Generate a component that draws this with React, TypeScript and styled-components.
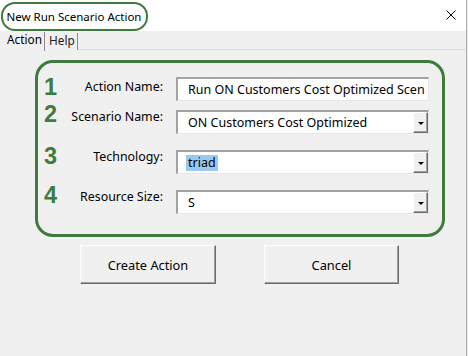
import React from "react";
import styled, { createGlobalStyle } from "styled-components";

const GREEN = "#3f7b3f";
const FONT = `"Noto Sans", "Open Sans", Arial, sans-serif`;

const GlobalStyle = createGlobalStyle`
  html, body { margin: 0; padding: 0; background: #f0f0f0; }
  body { font-family: ${FONT}; color: #000; }
  * { box-sizing: border-box; }
`;

const Window = styled.div`
  width: 467px;
  height: 356px;
  background: #f0f0f0;
  border-right: 1px solid #a9a9a9;
  display: flex;
  flex-direction: column;
`;

const TitleBar = styled.div`
  height: 31px;
  background: #ffffff;
  display: flex;
  align-items: center;
  justify-content: space-between;
  padding: 0 10px 0 1px;
`;

const TitleText = styled.div`
  height: 29px;
  margin-top: 1px;
  display: flex;
  align-items: center;
  padding: 0 5px 0 3.5px;
  border: 2.5px solid ${GREEN};
  border-radius: 14px;
  font-size: 11.5px;
  white-space: nowrap;
`;

const CloseIcon = styled.svg`
  width: 10px;
  height: 10px;
  margin-bottom: 1px;
`;

const TabStrip = styled.div`
  height: 20px;
  display: flex;
  align-items: flex-end;
  padding-left: 1px;
`;

const Tab = styled.div<{ $active?: boolean; $width: number; $pad: number }>`
  width: ${(p) => p.$width}px;
  height: ${(p) => (p.$active ? 19 : 17)}px;
  padding-left: ${(p) => p.$pad}px;
  border-right: 1px solid #8c8c8c;
  font-size: 11.8px;
  line-height: 15px;
  color: ${(p) => (p.$active ? "#000" : "#222")};
  margin-bottom: ${(p) => (p.$active ? 0 : 1)}px;
`;

const TabFill = styled.div`
  flex: 1;
  height: 1px;
  margin-bottom: 1px;
  background: #dedede;
`;

const GreenBox = styled.div`
  margin: 9px 0 0 35px;
  width: 410px;
  height: 177px;
  border: 3px solid ${GREEN};
  border-radius: 18px;
  padding: 14px 13px 0 3px;
  display: flex;
  flex-direction: column;
`;

const FormRow = styled.div<{ $gap: number }>`
  display: grid;
  grid-template-columns: 20px 1fr 253px;
  align-items: center;
  height: 24px;
  margin-top: ${(p) => p.$gap}px;
`;

const StepNumber = styled.div<{ $lift: number }>`
  font-family: "Liberation Sans", Arial, sans-serif;
  font-size: 23.5px;
  font-weight: 700;
  line-height: 18px;
  color: ${GREEN};
  transform: translateY(${(p) => p.$lift}px);
  padding-left: 3px;
`;

const Label = styled.div<{ $lift: number }>`
  text-align: right;
  padding-right: 13px;
  font-size: 12.4px;
  line-height: 16px;
  white-space: nowrap;
  transform: translateY(${(p) => p.$lift}px);
`;

const Field = styled.div`
  height: 24px;
  background: #ffffff;
  border-top: 2px solid #a3a3a3;
  border-left: 2px solid #a3a3a3;
  border-bottom: 1px solid #e6e6e6;
  border-right: 1px solid #e6e6e6;
  display: flex;
  align-items: center;
  overflow: hidden;
`;

const FieldText = styled.div`
  flex: 1;
  min-width: 0;
  padding-left: 10px;
  font-size: 12.5px;
  line-height: 16px;
  white-space: nowrap;
  overflow: hidden;
`;

const Selected = styled.span`
  background: #99c9ef;
  padding: 1px 2px 2px;
  margin-left: -2px;
`;

const DropButton = styled.div`
  width: 15px;
  height: 100%;
  background: #f0f0f0;
  border-top: 1px solid #ffffff;
  border-left: 1px solid #ffffff;
  border-right: 1px solid #6e6e6e;
  border-bottom: 1px solid #6e6e6e;
  box-shadow: inset -1px -1px 0 #a0a0a0;
  display: flex;
  align-items: center;
  justify-content: center;
`;

const Arrow = styled.div`
  width: 0;
  height: 0;
  border-left: 3px solid transparent;
  border-right: 3px solid transparent;
  border-top: 3px solid #000;
  margin-top: 1px;
`;

const ButtonRow = styled.div`
  display: flex;
  gap: 48px;
  margin: 8px 0 0 80px;
`;

const Button = styled.div<{ $width: number }>`
  width: ${(p) => p.$width}px;
  height: 39px;
  background: #f0f0f0;
  border-top: 1px solid #fdfdfd;
  border-left: 1px solid #fdfdfd;
  border-right: 1px solid #6a6a6a;
  border-bottom: 1px solid #6a6a6a;
  box-shadow: inset -1px -1px 0 #a0a0a0;
  display: flex;
  align-items: center;
  justify-content: center;
  font-size: 12.8px;
`;

type RowDef = {
  n: string;
  label: string;
  value: React.ReactNode;
  drop: boolean;
  gap: number;
  numLift: number;
  labelLift: number;
};

const rows: RowDef[] = [
  { n: "1", label: "Action Name:", value: "Run ON Customers Cost Optimized Scen", drop: false, gap: 0, numLift: -2, labelLift: -2 },
  { n: "2", label: "Scenario Name:", value: "ON Customers Cost Optimized", drop: true, gap: 9, numLift: -8, labelLift: -5 },
  { n: "3", label: "Technology:", value: <Selected>triad</Selected>, drop: true, gap: 16, numLift: -6, labelLift: -5 },
  { n: "4", label: "Resource Size:", value: "S", drop: true, gap: 16, numLift: -7, labelLift: -5 },
];

export default function App() {
  return (
    <>
      <GlobalStyle />
      <Window>
        <TitleBar>
          <TitleText>New Run Scenario Action</TitleText>
          <CloseIcon viewBox="0 0 10 10">
            <path d="M0.5 0.5 L9.5 9.5 M9.5 0.5 L0.5 9.5" stroke="#000" strokeWidth="1" fill="none" />
          </CloseIcon>
        </TitleBar>
        <TabStrip>
          <Tab $active $width={44} $pad={6}>Action</Tab>
          <Tab $width={33} $pad={4}>Help</Tab>
          <TabFill />
        </TabStrip>
        <GreenBox>
          {rows.map((r) => (
            <FormRow key={r.n} $gap={r.gap}>
              <StepNumber $lift={r.numLift}>{r.n}</StepNumber>
              <Label $lift={r.labelLift}>{r.label}</Label>
              <Field>
                <FieldText>{r.value}</FieldText>
                {r.drop && (
                  <DropButton>
                    <Arrow />
                  </DropButton>
                )}
              </Field>
            </FormRow>
          ))}
        </GreenBox>
        <ButtonRow>
          <Button $width={136}>Create Action</Button>
          <Button $width={135}>Cancel</Button>
        </ButtonRow>
      </Window>
    </>
  );
}
